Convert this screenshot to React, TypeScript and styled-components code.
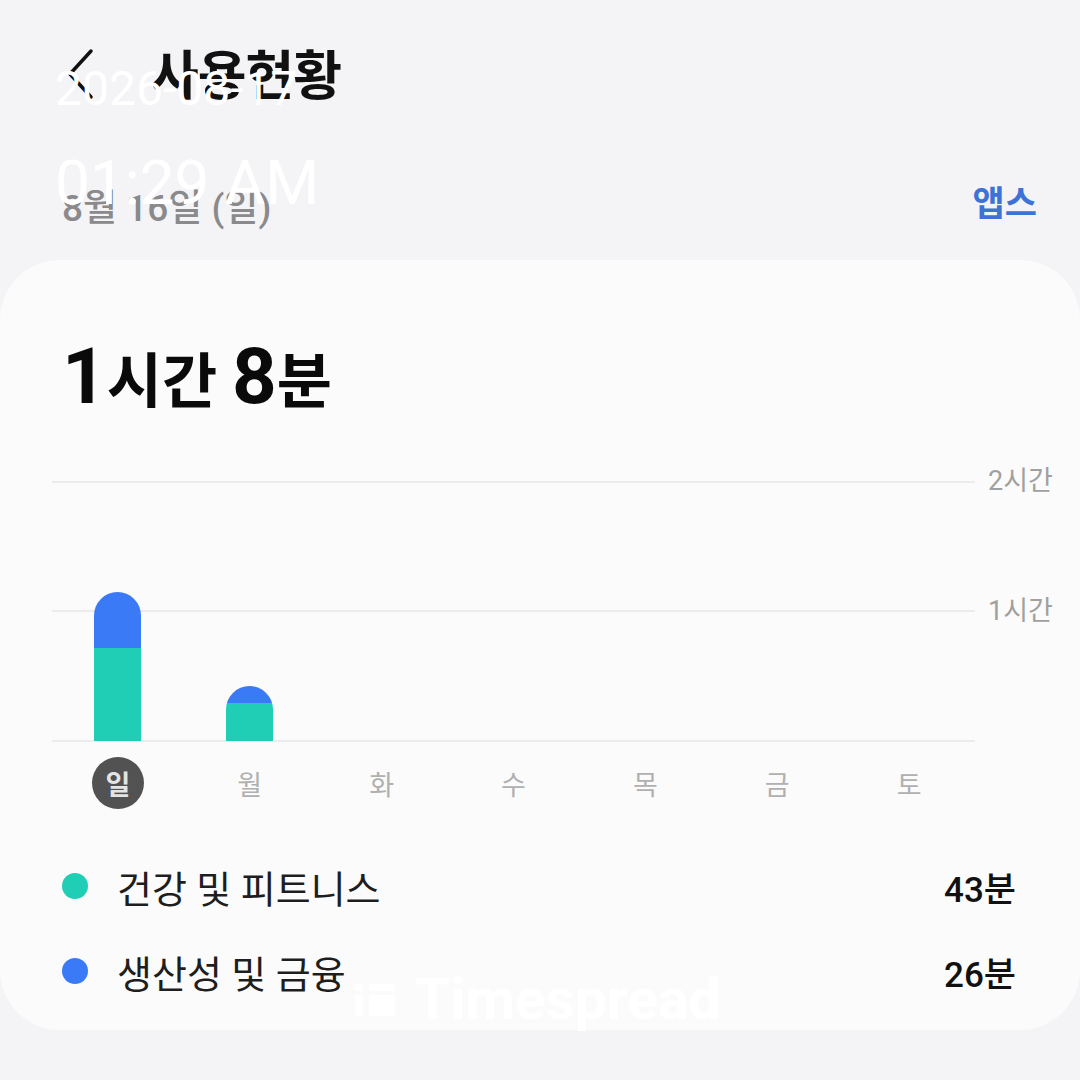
import { createGlobalStyle, styled } from "styled-components";

const GlobalStyle = createGlobalStyle`
  html, body {
    margin: 0;
    padding: 0;
    background-color: #f4f4f6;
  }

  body {
    font-family: Roboto, "Noto Sans CJK KR", "Noto Sans", sans-serif;
  }
`;

const HOUR_PX = 130;

const days = [
  { label: "일", health: 43, work: 26, selected: true },
  { label: "월", health: 17.5, work: 8 },
  { label: "화", health: 0, work: 0 },
  { label: "수", health: 0, work: 0 },
  { label: "목", health: 0, work: 0 },
  { label: "금", health: 0, work: 0 },
  { label: "토", health: 0, work: 0 },
];

const legend = [
  { name: "건강 및 피트니스", value: "43분", color: "#20cdb5" },
  { name: "생산성 및 금융", value: "26분", color: "#3b7af6" },
];

const App = () => {
  return (
    <Screen>
      <GlobalStyle />
      <Header>
        <BackButton>
          <svg width="34" height="52" viewBox="0 0 34 52" fill="none">
            <path
              d="M27 3 L6 26 L27 49"
              stroke="#111"
              strokeWidth="3.5"
              strokeLinecap="round"
              strokeLinejoin="round"
            />
          </svg>
        </BackButton>
        <Title>사용현황</Title>
      </Header>

      <DateRow>
        <DateText>8월 16일 (일)</DateText>
        <AppsLink>앱스</AppsLink>
      </DateRow>

      <Card>
        <Total>
          <TotalNum>1</TotalNum>시간 <TotalNum>8</TotalNum>분
        </Total>

        <ChartRow>
          <Plot>
            <Columns>
              {days.map((d) => {
                const total = d.health + d.work;
                return (
                  <Column key={d.label}>
                    {total > 0 && (
                      <Bar>
                        <BarPart
                          $color="#3b7af6"
                          style={{ height: (d.work * HOUR_PX) / 60 }}
                        />
                        <BarPart
                          $color="#20cdb5"
                          style={{ height: (d.health * HOUR_PX) / 60 }}
                        />
                      </Bar>
                    )}
                  </Column>
                );
              })}
            </Columns>
          </Plot>
          <Axis>
            <AxisLabel>2시간</AxisLabel>
            <AxisLabel>1시간</AxisLabel>
          </Axis>
        </ChartRow>

        <DayRow>
          {days.map((d) => (
            <DayCell key={d.label}>
              <DayLabel $selected={!!d.selected}>{d.label}</DayLabel>
            </DayCell>
          ))}
        </DayRow>

        <Legend>
          {legend.map((l) => (
            <LegendRow key={l.name}>
              <Dot $color={l.color} />
              <LegendName>{l.name}</LegendName>
              <LegendValue>{l.value}</LegendValue>
            </LegendRow>
          ))}
        </Legend>
      </Card>

      <Stamp>
        <StampDate>2026-08-17</StampDate>
        <StampTime>01:29 AM</StampTime>
      </Stamp>

      <Watermark>
        <svg width="44" height="36" viewBox="0 0 44 36" fill="#ffffff">
          <rect x="2" y="2" width="8" height="7" />
          <rect x="16" y="2" width="26" height="7" />
          <rect x="2" y="13" width="8" height="21" />
          <rect x="16" y="13" width="26" height="21" />
        </svg>
        Timespread
      </Watermark>
    </Screen>
  );
};

export default App;

const Screen = styled.div`
  position: relative;
  width: 1080px;
  height: 1080px;
  overflow: hidden;
  background-color: #f4f4f6;
`;

const Header = styled.div`
  height: 150px;
  padding-left: 64px;
  display: flex;
  align-items: flex-start;
  padding-top: 48px;
  box-sizing: border-box;
`;

const BackButton = styled.div`
  width: 86px;
  height: 52px;
  display: flex;
  align-items: center;
`;

const Title = styled.div`
  font-size: 53px;
  font-weight: 700;
  color: #111;
  line-height: 56px;
  margin-top: 1px;
  letter-spacing: -1px;
`;

const DateRow = styled.div`
  height: 110px;
  padding: 37px 43px 0 62px;
  box-sizing: border-box;
  display: flex;
  justify-content: space-between;
  align-items: flex-start;
`;

const DateText = styled.div`
  font-size: 37px;
  font-weight: 500;
  color: #8a8a8c;
  line-height: 44px;
`;

const AppsLink = styled.div`
  font-size: 35px;
  font-weight: 700;
  color: #3d72d6;
  line-height: 44px;
  margin-top: -4px;
`;

const Card = styled.div`
  height: 770px;
  background-color: #fbfbfb;
  border-radius: 60px;
  box-sizing: border-box;
  padding-top: 77px;
`;

const Total = styled.div`
  padding-left: 62px;
  font-size: 60px;
  font-weight: 700;
  color: #0a0a0a;
  line-height: 80px;
  height: 80px;
`;

const TotalNum = styled.span`
  font-size: 78px;
`;

const ChartRow = styled.div`
  margin-top: 64px;
  padding-left: 52px;
  display: flex;
`;

const Plot = styled.div`
  width: 923px;
  height: 261px;
  background-image: linear-gradient(#ececec, #ececec),
    linear-gradient(#ececec, #ececec), linear-gradient(#ececec, #ececec);
  background-size: 100% 2px;
  background-repeat: no-repeat;
  background-position: 0 0, 0 129px, 0 259px;
`;

const Columns = styled.div`
  height: 100%;
  display: grid;
  grid-template-columns: repeat(7, 1fr);
  align-items: end;
`;

const Column = styled.div`
  display: flex;
  justify-content: center;
  align-items: flex-end;
  height: 100%;
`;

const Bar = styled.div`
  width: 47px;
  display: flex;
  flex-direction: column;
  border-radius: 24px 24px 0 0;
  overflow: hidden;
  margin-bottom: 1px;
`;

const BarPart = styled.div<{ $color: string }>`
  background-color: ${(p) => p.$color};
`;

const Axis = styled.div`
  margin-left: 13px;
  display: flex;
  flex-direction: column;
  gap: 94px;
  margin-top: -18px;
`;

const AxisLabel = styled.div`
  font-size: 27px;
  color: #a0a0a0;
  line-height: 36px;
`;

const DayRow = styled.div`
  margin-left: 52px;
  width: 923px;
  margin-top: 15px;
  display: grid;
  grid-template-columns: repeat(7, 1fr);
`;

const DayCell = styled.div`
  display: flex;
  justify-content: center;
`;

const DayLabel = styled.div<{ $selected: boolean }>`
  width: 52px;
  height: 52px;
  border-radius: 50%;
  display: flex;
  align-items: center;
  justify-content: center;
  font-size: 27px;
  font-weight: ${(p) => (p.$selected ? 700 : 400)};
  color: ${(p) => (p.$selected ? "#e4e4e4" : "#b0b0b0")};
  background-color: ${(p) => (p.$selected ? "#525252" : "transparent")};
`;

const Legend = styled.div`
  margin-top: 52px;
  padding: 0 64px 0 62px;
  display: flex;
  flex-direction: column;
  gap: 35px;
`;

const LegendRow = styled.div`
  height: 50px;
  display: flex;
  align-items: center;
`;

const Dot = styled.div<{ $color: string }>`
  width: 26px;
  height: 26px;
  border-radius: 50%;
  background-color: ${(p) => p.$color};
  margin-right: 29px;
`;

const LegendName = styled.div`
  flex: 1;
  font-size: 38px;
  color: #1e1e1e;
`;

const LegendValue = styled.div`
  font-size: 35px;
  font-weight: 500;
  color: #111;
`;

const Stamp = styled.div`
  position: absolute;
  top: 62px;
  left: 55px;
  color: #ffffff;
  font-family: Roboto, "Noto Sans", sans-serif;
  display: flex;
  flex-direction: column;
`;

const StampDate = styled.div`
  font-size: 48px;
  line-height: 54px;
`;

const StampTime = styled.div`
  margin-top: 32px;
  font-size: 62px;
  line-height: 70px;
`;

const Watermark = styled.div`
  position: absolute;
  left: 353px;
  top: 966px;
  display: flex;
  align-items: center;
  gap: 18px;
  color: #ffffff;
  font-family: Roboto, "Noto Sans", sans-serif;
  font-size: 57px;
  font-weight: 700;
`;
